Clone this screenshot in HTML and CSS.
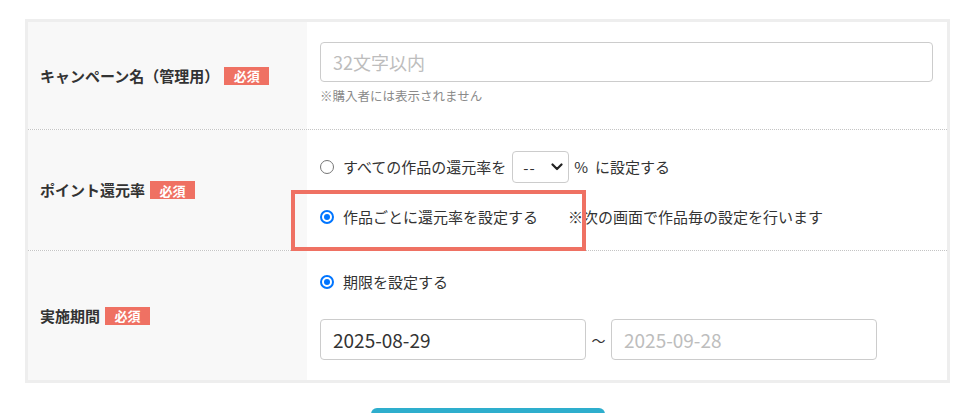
FILE: index.html
```html
<!DOCTYPE html>
<html lang="ja">
<head>
<meta charset="utf-8">
<title>キャンペーン設定</title>
<link rel="stylesheet" href="styles.css">
</head>
<body>
<div class="page">
  <div class="form">
    <div class="row row-name">
      <div class="label"><span class="label-text">キャンペーン名（管理用）</span><span class="badge">必須</span></div>
      <div class="field">
        <input class="text-input" type="text" placeholder="32文字以内">
        <p class="note">※購入者には表示されません</p>
      </div>
    </div>
    <div class="row row-point">
      <div class="label"><span class="label-text">ポイント還元率</span><span class="badge">必須</span></div>
      <div class="field">
        <div class="option option-all">
          <span class="radio"></span>
          <span class="opt-text">すべての作品の還元率を</span>
          <span class="select"><span class="select-value">--</span><svg class="chev" width="12" height="8" viewBox="0 0 12 8"><path d="M1.5 1.5 L6 6 L10.5 1.5" fill="none" stroke="#222" stroke-width="2.2" stroke-linecap="round" stroke-linejoin="round"/></svg></span>
          <span class="opt-text">%&nbsp; に設定する</span>
        </div>
        <div class="option option-each">
          <span class="radio checked"></span>
          <span class="opt-text">作品ごとに還元率を設定する</span>
          <span class="opt-note">※次の画面で作品毎の設定を行います</span>
        </div>
        <div class="highlight"></div>
      </div>
    </div>
    <div class="row row-period">
      <div class="label"><span class="label-text">実施期間</span><span class="badge">必須</span></div>
      <div class="field">
        <div class="option">
          <span class="radio checked"></span>
          <span class="opt-text">期限を設定する</span>
        </div>
        <div class="dates">
          <input class="date-input" type="text" value="2025-08-29">
          <span class="tilde">～</span>
          <input class="date-input" type="text" placeholder="2025-09-28">
        </div>
      </div>
    </div>
  </div>
  <div class="actions">
    <button class="submit" type="button" aria-label="次へ"></button>
  </div>
</div>
</body>
</html>
```

FILE: styles.css
```css
* { box-sizing: border-box; }

html, body {
  margin: 0;
  padding: 0;
  background: #fff;
}

body {
  font-family: "Noto Sans CJK JP", "Noto Sans", sans-serif;
  color: #333;
}

.page {
  padding: 19px 14px 0 25px;
}

.form {
  border: 3px solid #eeeeee;
  display: flex;
  flex-direction: column;
}

.row {
  display: grid;
  grid-template-columns: 279px 1fr;
  border-bottom: 1px dotted #c4c4c4;
}

.row:last-child {
  border-bottom: none;
}

.label {
  background: #f8f8f8;
  display: flex;
  align-items: center;
  padding-left: 12px;
}

.label-text {
  font-size: 15px;
  font-weight: 700;
  color: #333;
  line-height: 20px;
}

.badge {
  display: inline-flex;
  align-items: center;
  justify-content: center;
  width: 45px;
  height: 18px;
  margin-left: 5px;
  background: #ef7163;
  color: #fff;
  font-size: 13px;
  font-weight: 700;
  line-height: 1;
}

.field {
  position: relative;
  padding: 20px 14px 0 13px;
}

.row-name .field {
  height: 107px;
}

.text-input,
.date-input {
  display: block;
  height: 40px;
  border: 1px solid #cccccc;
  border-radius: 4px;
  padding: 0 12px;
  font-family: "Noto Sans CJK JP", "Noto Sans", sans-serif;
  font-size: 18px;
  color: #333;
  background: #fff;
  outline: none;
}

.text-input {
  width: 100%;
}

.text-input::placeholder,
.date-input::placeholder {
  color: #bdbdbd;
}

.note {
  margin: 5px 0 0;
  font-size: 12.5px;
  line-height: 18px;
  color: #8a8a8a;
}

.row-point .field {
  height: 120px;
  padding-top: 21px;
}

.option {
  display: flex;
  align-items: center;
  height: 20px;
}

.option-all {
  height: 32px;
}

.option-each {
  margin-top: 24px;
}

.radio {
  width: 14px;
  height: 14px;
  border: 1px solid #767676;
  border-radius: 50%;
  margin-right: 9px;
  flex: none;
  background: #fff;
  position: relative;
}

.radio.checked {
  border: 2px solid #0075ff;
}

.radio.checked::after {
  content: "";
  position: absolute;
  left: 2px;
  top: 2px;
  width: 6px;
  height: 6px;
  border-radius: 50%;
  background: #0075ff;
}

.opt-text {
  font-size: 15px;
  line-height: 20px;
  color: #333;
}

.select {
  display: inline-flex;
  align-items: center;
  justify-content: space-between;
  width: 57px;
  height: 32px;
  margin: 0 5px 0 6px;
  padding: 0 5px 0 10px;
  border: 1px solid #cccccc;
  border-radius: 4px;
  background: #fff;
  font-size: 15px;
  color: #333;
}

.select-value {
  letter-spacing: 1px;
}

.chev {
  display: block;
}

.opt-note {
  margin-left: 30px;
  font-size: 15px;
  line-height: 20px;
  color: #333;
}

.highlight {
  position: absolute;
  left: -16px;
  top: 60px;
  width: 295px;
  height: 61px;
  border: 4px solid #ef7163;
  pointer-events: none;
}

.row-period .field {
  height: 129px;
  padding-top: 21px;
}

.dates {
  display: flex;
  align-items: center;
  margin-top: 27px;
}

.date-input {
  width: 266px;
  height: 41px;
  font-size: 19px;
}

.tilde {
  width: 25px;
  text-align: center;
  font-size: 14px;
  color: #333;
}

.actions {
  display: flex;
  justify-content: center;
  padding-top: 25px;
}

.submit {
  width: 234px;
  height: 50px;
  border: none;
  border-radius: 6px;
  background: #2eaecd;
}
```
